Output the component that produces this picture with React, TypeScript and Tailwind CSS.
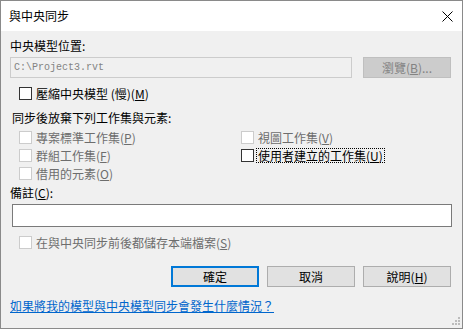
import type React from "react"

const font = { fontFamily: '"Noto Sans CJK TC", "Noto Sans", sans-serif' }

function Box({ disabled }: { disabled?: boolean }) {
  return (
    <span
      className={`w-[13px] h-[13px] shrink-0 border ${
        disabled ? "border-[#cccccc] bg-white" : "border-[#333333] bg-white"
      }`}
    />
  )
}

function Check({
  label,
  mk,
  tail,
  disabled,
  focus,
}: {
  label: string
  mk: string
  tail?: string
  disabled?: boolean
  focus?: boolean
}) {
  return (
    <div className="h-[18px] flex items-center">
      <Box disabled={disabled} />
      <span
        className={`ml-[2px] px-[1px] leading-[13px] whitespace-nowrap ${
          disabled ? "text-[#6d6d6d]" : "text-black"
        } ${focus ? "border border-dotted border-black" : "border border-transparent"}`}
      >
        {label}(<u>{mk}</u>){tail}
      </span>
    </div>
  )
}

function Btn({ children, primary }: { children: React.ReactNode; primary?: boolean }) {
  return (
    <div
      className={`w-[88px] h-[21px] flex items-center justify-center bg-[#e1e1e1] text-black ${
        primary ? "border-2 border-[#0078d7]" : "border border-[#adadad]"
      }`}
    >
      {children}
    </div>
  )
}

export default function App() {
  return (
    <div
      className="relative w-[463px] h-[329px] border border-[#8a8a8a] bg-[#f0f0f0] flex flex-col text-[12px] leading-[14px] text-black"
      style={font}
    >
      {/* Title bar */}
      <div className="h-[30px] bg-white flex items-center justify-between pl-[8px] pr-[9px] shrink-0">
        <span className="text-[12px]">與中央同步</span>
        <svg width="11" height="11" viewBox="0 0 11 11" className="mt-[1px]">
          <path d="M0.5 0.5 L10.5 10.5 M10.5 0.5 L0.5 10.5" stroke="#000" strokeWidth="1" />
        </svg>
      </div>

      {/* Body */}
      <div className="flex flex-col pl-[9px] pr-[11px] pt-[8px]">
        <div>中央模型位置:</div>
        <div className="mt-[4px] flex items-center justify-between">
          <div className="w-[342px] h-[21px] border border-[#cccccc] bg-[#f0f0f0] flex items-center pl-[3px]">
            <span className="text-[10px] text-[#838383]" style={{ fontFamily: '"Liberation Mono", monospace' }}>
              C:\Project3.rvt
            </span>
          </div>
          <div className="w-[88px] h-[21px] border border-[#bfbfbf] bg-[#cccccc] flex items-center justify-center text-[#838383]">
            瀏覽(<u>B</u>)...
          </div>
        </div>

        <div className="mt-[6px] pl-[9px]">
          <Check label="壓縮中央模型 (慢)" mk="M" />
        </div>

        <div className="mt-[9px] pl-[2px]">同步後放棄下列工作集與元素:</div>
        <div className="mt-[3px] pl-[9px] flex">
          <div className="w-[222px] flex flex-col">
            <Check label="專案標準工作集" mk="P" disabled />
            <Check label="群組工作集" mk="F" disabled />
            <Check label="借用的元素" mk="O" disabled />
          </div>
          <div className="flex flex-col">
            <Check label="視圖工作集" mk="V" disabled />
            <Check label="使用者建立的工作集" mk="U" focus />
          </div>
        </div>

        <div className="mt-[4px]">
          備註(<u>C</u>):
        </div>
        <div className="mt-[4px] ml-[2px] w-[440px] h-[23px] border border-[#7a7a7a] bg-white" />

        <div className="mt-[6px] pl-[9px]">
          <Check label="在與中央同步前後都儲存本端檔案" mk="S" disabled />
        </div>

        <div className="mt-[15px] flex justify-end gap-[8px]">
          <Btn primary>確定</Btn>
          <Btn>取消</Btn>
          <Btn>
            說明(<u>H</u>)
          </Btn>
        </div>

        <div className="mt-[12px]">
          <span className="text-[#0066cc] underline">如果將我的模型與中央模型同步會發生什麼情況？</span>
        </div>
      </div>

      {/* Resize grip */}
      <svg width="8" height="8" viewBox="0 0 8 8" className="absolute right-[2px] bottom-[3px]">
        <rect x="6" y="0" width="2" height="2" fill="#bcbcbc" />
        <rect x="3" y="3" width="2" height="2" fill="#bcbcbc" />
        <rect x="6" y="3" width="2" height="2" fill="#bcbcbc" />
        <rect x="0" y="6" width="2" height="2" fill="#bcbcbc" />
        <rect x="3" y="6" width="2" height="2" fill="#bcbcbc" />
        <rect x="6" y="6" width="2" height="2" fill="#bcbcbc" />
      </svg>
    </div>
  )
}
